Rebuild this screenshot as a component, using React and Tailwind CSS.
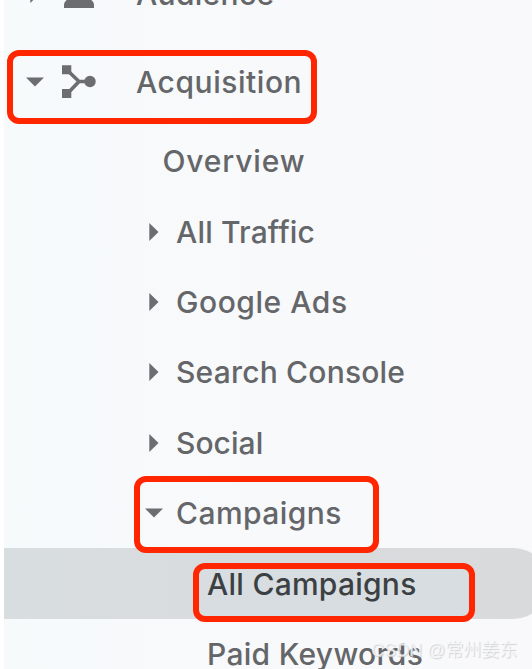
import React from "react";

const reports = [
  { id: 1, label: "All Traffic", text: "tracking-[0.15px]" },
  { id: 2, label: "Google Ads", text: "tracking-[0.55px]" },
  { id: 3, label: "Search Console", text: "tracking-[0.2px]" },
  { id: 4, label: "Social", text: "tracking-[0.05px]" },
];

function ArrowRight({ className = "" }) {
  return (
    <svg className={`h-[18px] w-[10px] shrink-0 fill-[#6b6d70] ${className}`} viewBox="0 0 10 18">
      <path d="M0.3 0 L9.5 9 L0.3 18 Z" />
    </svg>
  );
}

function ArrowDown({ className = "" }) {
  return (
    <svg className={`h-[10px] w-[18px] shrink-0 fill-[#6b6d70] ${className}`} viewBox="0 0 18 10">
      <path d="M0 0.5 H18 L9 9.5 Z" />
    </svg>
  );
}

function Highlight({ className = "" }) {
  return (
    <div className={`pointer-events-none absolute z-10 rounded-[12px] border-[6px] border-[#ff2600] ${className}`} />
  );
}

export default function App() {
  return (
    <div className="relative h-[669px] w-[532px] overflow-hidden bg-white pl-1 font-['Inter',sans-serif] text-[30px] leading-none font-medium whitespace-nowrap text-[#646669]">
      <nav className="flex h-full flex-col bg-linear-to-r from-[#f6fafb] via-[#f8f9fb] to-[#f9f9fb]">
        {/* Audience */}
        <div className="-mt-[50px] flex h-[88px] shrink-0 items-center">
          <ArrowRight className="ml-[26px]" />
          <svg className="ml-[24px] h-[30px] w-[30px] fill-[#6b6d70]" viewBox="0 0 30 30">
            <circle cx="15" cy="7" r="7" />
            <path d="M0 29 V26 C0 20 9 17.5 15 17.5 S30 20 30 26 V29 Z" />
          </svg>
          <span className="ml-[42px] tracking-[0.3px]">Audience</span>
        </div>

        {/* Acquisition */}
        <div className="relative flex h-[88px] shrink-0 items-center">
          <ArrowDown className="ml-[22px]" />
          <svg className="ml-[18px] h-[34px] w-[34px]" viewBox="0 0 34 34">
            <path d="M4 4 L17 16.5 L4 30 M17 16.5 H28" fill="none" stroke="#6b6d70" strokeWidth="3.6" />
            <path d="M0 0.3 H9.3 V9.3 H0 Z M0 24 H9.3 V33 H0 Z" fill="#6b6d70" />
            <circle cx="28" cy="16.5" r="5.7" fill="#6b6d70" />
          </svg>
          <span className="ml-[40px] tracking-[0.55px]">Acquisition</span>
          <Highlight className="top-3 left-[2.5px] h-[74px] w-[310px]" />
        </div>

        <div className="flex h-[70.4px] shrink-0 items-center pl-[158.5px]">
          <span className="tracking-[0.85px]">Overview</span>
        </div>

        {reports.map((item) => (
          <div key={item.id} className="flex h-[70.4px] shrink-0 items-center pl-[145px]">
            <ArrowRight />
            <span className={`ml-[17px] ${item.text}`}>{item.label}</span>
          </div>
        ))}

        {/* Campaigns */}
        <div className="relative flex h-[70.4px] shrink-0 items-center pl-[141px]">
          <ArrowDown />
          <span className="ml-[13px] tracking-[0.45px]">Campaigns</span>
          <Highlight className="-top-[2px] left-[130px] h-[77px] w-[245px]" />
        </div>
        <div className="relative -mr-[17px] flex h-[70.4px] shrink-0 items-center rounded-r-full bg-linear-to-r from-[#d8dddf] to-[#d9dadc] pl-[203px] text-[#3c4043]">
          <Highlight className="top-[15px] left-[189px] h-[59px] w-[282px] bg-linear-to-r from-[#d7dde0] to-[#d7dde0] bg-clip-padding" />
          <span className="relative z-20 tracking-[0.25px]">All Campaigns</span>
        </div>
        <div className="flex h-[70.4px] shrink-0 items-center pl-[203px]">
          <span className="tracking-[0.3px]">Paid Keywords</span>
        </div>
      </nav>

      <span className="absolute top-[640px] left-[371px] z-30 font-['Liberation_Sans','Noto_Sans_CJK_SC',sans-serif] text-[18px] leading-[20px] font-normal text-[#f8f9fb]/80 [text-shadow:1px_1px_1px_#d0d2d4]">
        CSDN @常州姜东
      </span>
    </div>
  );
}
